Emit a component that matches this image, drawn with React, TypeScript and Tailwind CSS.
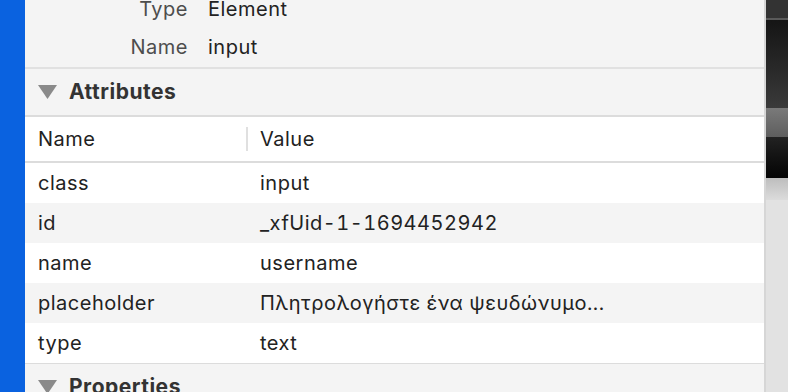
const general = [
  { label: "Type", value: "Element" },
  { label: "Name", value: "input" },
];

const attributes = [
  { name: "class", value: "input" },
  { name: "id", value: "_xfUid-1-1694452942" },
  { name: "name", value: "username" },
  { name: "placeholder", value: "Πλητρολογήστε ένα ψευδώνυμο..." },
  { name: "type", value: "text" },
];

const Triangle = () => (
  <svg width="19" height="14" viewBox="0 0 19 14" className="shrink-0">
    <path d="M0 0 H19 L9.5 14 Z" fill="#8a8a8a" />
  </svg>
);

const SectionHeader = ({ title }: { title: string }) => (
  <div className="flex h-[46px] items-center gap-[12px] pl-[13px] text-[21px] font-bold text-[#333]">
    <Triangle />
    <span>{title}</span>
  </div>
);

export default function App() {
  return (
    <div
      className="flex h-[392px] w-[788px] overflow-hidden text-[20px] tracking-[0.5px] text-[#222]"
      style={{ fontFamily: "Inter, 'Noto Sans', sans-serif" }}
    >
      <div className="w-[25px] shrink-0 bg-[#0a62e0]" />
      <div className="min-w-0 flex-1 overflow-hidden bg-[#f4f4f4]">
        <div className="-mt-[10px] pb-[1px]">
          {general.map((row) => (
            <div key={row.label} className="flex h-[38px] items-center">
              <div className="w-[163px] text-right text-[#4d4d4d]">{row.label}</div>
              <div className="pl-[20px]">{row.value}</div>
            </div>
          ))}
        </div>
        <div className="h-[2px] bg-[#e1e1e1]" />
        <SectionHeader title="Attributes" />
        <div className="h-[2px] bg-[#dcdcdc]" />
        <div className="flex h-[44px] items-center bg-white">
          <div className="w-[221px] pl-[13px]">Name</div>
          <div className="h-[24px] w-[2px] bg-[#e0e0e0]" />
          <div className="pl-[12px]">Value</div>
        </div>
        <div className="h-[2px] bg-[#dcdcdc]" />
        {attributes.map((a, i) => (
          <div
            key={a.name}
            className={`flex h-[40px] items-center ${i % 2 === 0 ? "bg-white" : "bg-[#f4f4f4]"}`}
          >
            <div className="w-[235px] pl-[13px]">{a.name}</div>
            <div className="whitespace-nowrap tabular-nums">{a.value}</div>
          </div>
        ))}
        <div className="h-[1px] bg-[#dcdcdc]" />
        <SectionHeader title="Properties" />
      </div>
      <div className="w-[2px] shrink-0 bg-[#d6d6d6]" />
      <div className="flex w-[22px] shrink-0 flex-col">
        <div className="h-[18px] bg-[#333]" />
        <div className="h-[2px] bg-[#5a5a5a]" />
        <div className="h-[88px] bg-gradient-to-b from-[#151515] to-[#3a3a3a]" />
        <div className="h-[29px] bg-gradient-to-b from-[#7a7a7a] to-[#5e5e5e]" />
        <div className="h-[41px] bg-gradient-to-b from-[#222] to-[#050505]" />
        <div className="h-[22px] bg-gradient-to-b from-[#bdbdbd] to-[#dcdcdc]" />
        <div className="flex-1 bg-[#e2e2e2]" />
      </div>
    </div>
  );
}
